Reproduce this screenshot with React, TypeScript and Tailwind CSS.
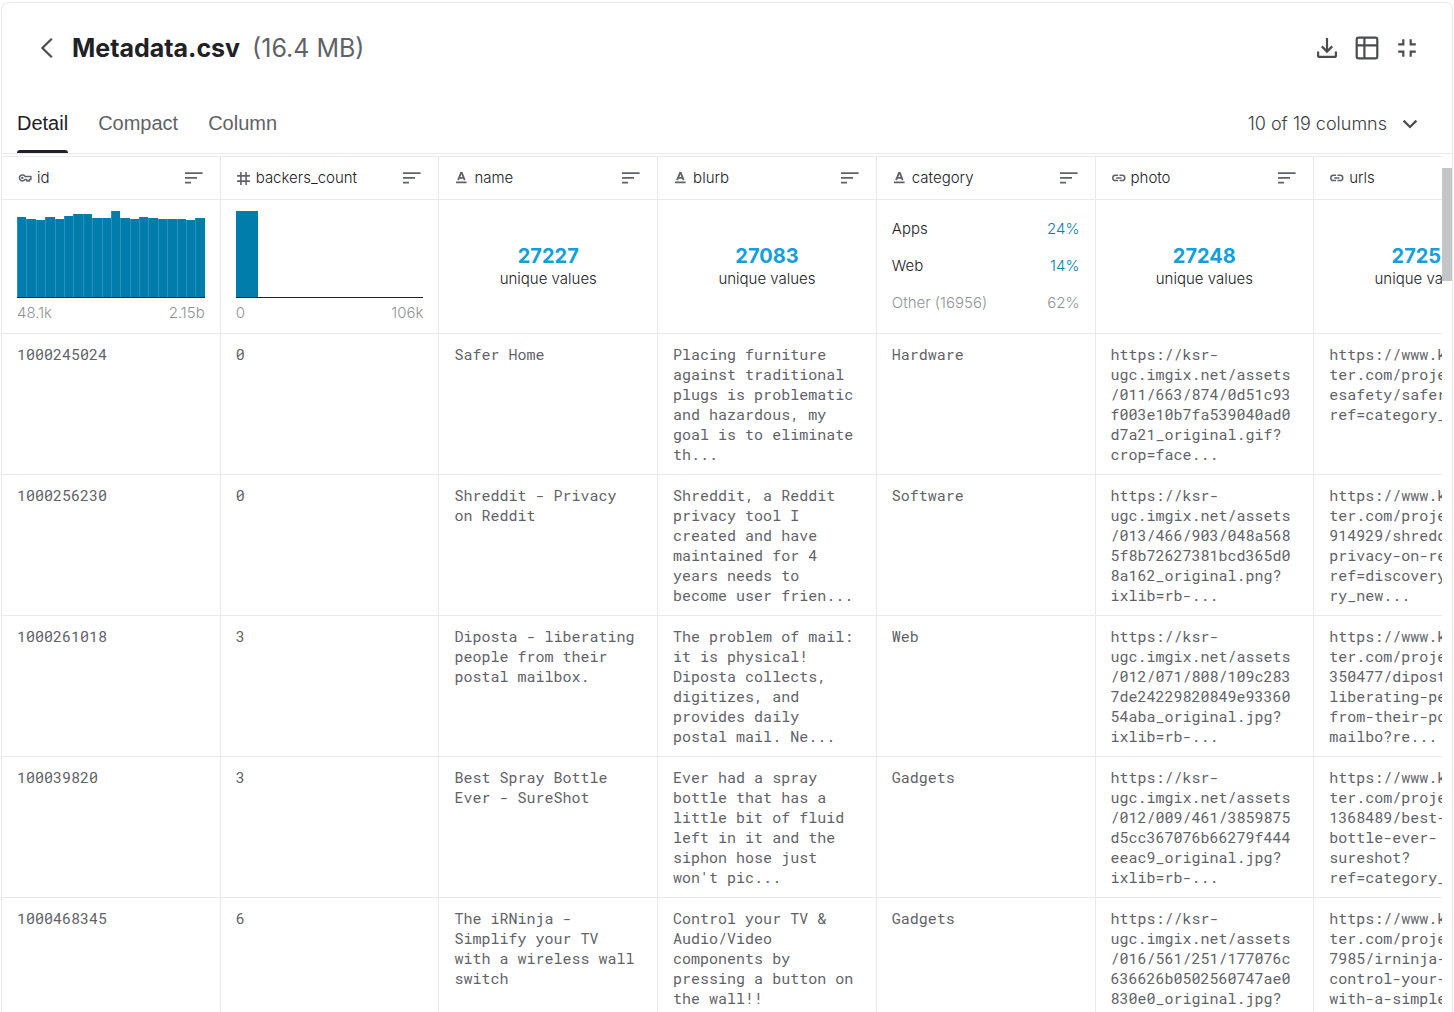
import React from "react";

type Kind = "key" | "hash" | "text" | "link";

const ICON_BOX: Record<Kind, string> = {
  key: "mr-[5px] h-4 w-[15px] shrink-0",
  hash: "mr-[5px] h-[15px] w-[15px] shrink-0",
  text: "mr-[6px] h-[14px] w-[14px] shrink-0",
  link: "mr-[5px] h-4 w-[15px] shrink-0",
};

function KindIcon({ kind }: { kind: Kind }) {
  const box = ICON_BOX[kind];
  if (kind === "key")
    return (
      <svg viewBox="-1 0 15 16" className={box} fill="none" stroke="#5f6368" strokeWidth="1.5" aria-hidden="true">
        <path d="M7 6.4A3 3 0 1 0 7 9.4H8.8V11H11.4V9.4H12.9V6.4Z" strokeLinejoin="round" />
        <circle cx="4.3" cy="7.9" r="1.2" fill="#5f6368" stroke="none" />
      </svg>
    );
  if (kind === "hash")
    return (
      <svg viewBox="-.5 -.5 15 15" className={box} fill="none" stroke="#5f6368" strokeWidth="1.6" aria-hidden="true">
        <path d="M4.4 .6V13.4M9.6 .6V13.4M.6 4.4H13.4M.6 9.6H13.4" />
      </svg>
    );
  if (kind === "text")
    return (
      <svg viewBox="0 0 14 14" className={box} aria-hidden="true">
        <path d="M2 10.6H12.6V12.3H2Z" fill="#5f6368" />
        <path d="M4.1 9.2L7 2H7.8L10.7 9.2M5.2 6.9H9.6" fill="none" stroke="#5f6368" strokeWidth="1.8" />
      </svg>
    );
  return (
    <svg viewBox="-1 0 15 16" className={box} fill="none" stroke="#5f6368" strokeWidth="1.5" aria-hidden="true">
      <path d="M6.1 5.2H3.5A2.7 2.7 0 0 0 3.5 10.6H6.1M7.5 5.2H10.1A2.7 2.7 0 0 1 10.1 10.6H7.5M4.2 7.9H9.4" />
    </svg>
  );
}

function SortIcon() {
  return (
    <svg viewBox="0 0 18 12" className="h-3 w-[18px]" fill="#5f6368" aria-hidden="true">
      <path d="M0 .2H17.6V2H0ZM0 5H12V6.8H0ZM0 9.7H6V11.5H0Z" />
    </svg>
  );
}

const ID_BARS = [80, 78, 77, 80, 78, 81, 83, 83, 79, 79, 86, 79, 78, 80, 79, 78, 78, 78, 77, 79];

function Histogram({ children, from, to }: { children: React.ReactNode; from: string; to: string }) {
  return (
    <div className="pt-[11px]">
      <div className="flex h-[87px] items-end border-b border-[#202124]">{children}</div>
      <div className="mt-[3px] flex justify-between leading-6 font-light text-[#8f9499]">
        <span>{from}</span>
        <span>{to}</span>
      </div>
    </div>
  );
}

function Unique({ count }: { count: string }) {
  return (
    <div className="flex h-full flex-col items-center justify-center whitespace-nowrap">
      <span className="text-xl leading-6 font-bold text-[#149fdb]">{count}</span>
      <span className="leading-[22px] font-light text-[#202124]">unique values</span>
    </div>
  );
}

const CATEGORIES = [
  { label: "Apps", share: "24%", row: "flex justify-between text-[#202124]", pct: "text-[#0781ad]" },
  { label: "Web", share: "14%", row: "flex justify-between text-[#202124]", pct: "text-[#0781ad]" },
  { label: "Other (16956)", share: "62%", row: "flex justify-between text-[#8f9499]", pct: "" },
];

const COLUMNS: { name: string; kind: Kind; summary: React.ReactNode }[] = [
  {
    name: "id",
    kind: "key",
    summary: (
      <Histogram from="48.1k" to="2.15b">
        {ID_BARS.map((h, i) => (
          <div key={i} className="flex-1 border-l border-[#2b93ba] bg-[#007dab]" style={{ height: h }} />
        ))}
      </Histogram>
    ),
  },
  {
    name: "backers_count",
    kind: "hash",
    summary: (
      <Histogram from="0" to="106k">
        <div className="h-[86px] w-[22px] bg-[#007dab]" />
      </Histogram>
    ),
  },
  { name: "name", kind: "text", summary: <Unique count="27227" /> },
  { name: "blurb", kind: "text", summary: <Unique count="27083" /> },
  {
    name: "category",
    kind: "text",
    summary: (
      <div className="flex flex-col gap-[13px] pt-[17px] leading-6 font-light">
        {CATEGORIES.map((c) => (
          <div key={c.label} className={c.row}>
            <span>{c.label}</span>
            <span className={c.pct}>{c.share}</span>
          </div>
        ))}
      </div>
    ),
  },
  { name: "photo", kind: "link", summary: <Unique count="27248" /> },
  { name: "urls", kind: "link", summary: <Unique count="27254" /> },
];

const ROWS: string[][] = [
  [
    "1000245024",
    "0",
    "Safer Home",
    "Placing furniture against traditional plugs is problematic and hazardous, my goal is to eliminate th...",
    "Hardware",
    "https://ksr-\nugc.imgix.net/assets\n/011/663/874/0d51c93\nf003e10b7fa539040ad0\nd7a21_original.gif?\ncrop=face...",
    "https://www.kickstar\nter.com/projects/saf\nesafety/safer-home?\nref=category_newest",
  ],
  [
    "1000256230",
    "0",
    "Shreddit - Privacy on Reddit",
    "Shreddit, a Reddit privacy tool I created and have maintained for 4 years needs to become user frien...",
    "Software",
    "https://ksr-\nugc.imgix.net/assets\n/013/466/903/048a568\n5f8b72627381bcd365d0\n8a162_original.png?\nixlib=rb-...",
    "https://www.kickstar\nter.com/projects/191\n914929/shreddit-\nprivacy-on-reddit?\nref=discovery_catego\nry_new...",
  ],
  [
    "1000261018",
    "3",
    "Diposta - liberating people from their postal mailbox.",
    "The problem of mail: it is physical! Diposta collects, digitizes, and provides daily postal mail. Ne...",
    "Web",
    "https://ksr-\nugc.imgix.net/assets\n/012/071/808/109c283\n7de24229820849e93360\n54aba_original.jpg?\nixlib=rb-...",
    "https://www.kickstar\nter.com/projects/164\n350477/diposta-\nliberating-people-\nfrom-their-postal-\nmailbo?re...",
  ],
  [
    "100039820",
    "3",
    "Best Spray Bottle Ever - SureShot",
    "Ever had a spray bottle that has a little bit of fluid left in it and the siphon hose just won't pic...",
    "Gadgets",
    "https://ksr-\nugc.imgix.net/assets\n/012/009/461/3859875\nd5cc367076b66279f444\neeac9_original.jpg?\nixlib=rb-...",
    "https://www.kickstar\nter.com/projects/107\n1368489/best-spray-\nbottle-ever-\nsureshot?\nref=category_newest",
  ],
  [
    "1000468345",
    "6",
    "The iRNinja - Simplify your TV with a wireless wall switch",
    "Control your TV & Audio/Video components by pressing a button on the wall!!",
    "Gadgets",
    "https://ksr-\nugc.imgix.net/assets\n/016/561/251/177076c\n636626b0502560747ae0\n830e0_original.jpg?\nixlib=rb-...",
    "https://www.kickstar\nter.com/projects/105\n7985/irninja-\ncontrol-your-tv-\nwith-a-simple-wall-\nswitch?re...",
  ],
];

export default function App() {
  return (
    <div className="h-screen overflow-hidden bg-white px-px pt-[2px] font-['Inter',sans-serif]">
      <main className="flex h-full flex-col overflow-hidden rounded-t-lg border border-b-0 border-[#e8eaed]">
        <header className="flex h-[90px] shrink-0 items-center justify-between pr-[33px] pl-[38px]">
          <div className="flex items-center">
            <button aria-label="Back" className="mr-[18px]">
              <svg viewBox="0 0 14 22" className="h-[22px] w-[14px]" fill="none" stroke="#4a4c50" strokeWidth="2.2">
                <path d="M11.8 1.8L2.4 11L11.8 20.2" />
              </svg>
            </button>
            <h1 className="flex gap-3 text-[25px] leading-8 text-[#5f6368]">
              <span className="font-bold text-[#202124]">Metadata.csv</span>
              <span>(16.4 MB)</span>
            </h1>
          </div>
          <div className="flex items-center gap-4">
            <button aria-label="Download">
              <svg viewBox="0 0 24 24" className="h-6 w-6" fill="none" stroke="#4a4c50" strokeWidth="2.2">
                <path d="M12 2V15.4M6.8 10.4L12 15.6L17.2 10.4" />
                <path d="M3.1 15.6V19.4A1.5 1.5 0 0 0 4.6 20.9H19.4A1.5 1.5 0 0 0 20.9 19.4V15.6" />
              </svg>
            </button>
            <button aria-label="Table view">
              <svg viewBox="0 0 24 24" className="h-6 w-6" fill="none" stroke="#4a4c50" strokeWidth="2.2">
                <rect x="1.7" y="1.7" width="20.6" height="20.6" rx="1.8" />
                <path d="M1.7 9.4H22.3M9.4 1.7V22.3" />
              </svg>
            </button>
            <button aria-label="Exit full screen">
              <svg viewBox="0 0 24 24" className="h-6 w-6" fill="none" stroke="#4a4c50" strokeWidth="2.2">
                <path d="M3.2 8.3H8.3V3.2M15.7 3.2V8.3H20.8M3.2 15.7H8.3V20.8M15.7 20.8V15.7H20.8" />
              </svg>
            </button>
          </div>
        </header>

        <div className="mb-[2px] flex h-[61px] shrink-0 items-stretch justify-between border-b border-[#e8eaed] pr-[34px] pl-[15px]">
          <nav className="flex gap-[30px] font-['Liberation_Sans',Arial,sans-serif] text-xl text-[#5f6368]">
            <button className="relative text-[#202124]">
              Detail
              <span className="absolute inset-x-0 bottom-0 h-[3px] rounded-t-sm bg-[#202124]" />
            </button>
            <button>Compact</button>
            <button>Column</button>
          </nav>
          <button className="flex items-center gap-[15px] pt-[2px] text-lg font-light text-[#3c4043]">
            10 of 19 columns
            <svg viewBox="0 0 16 10" className="h-[10px] w-4" fill="none" stroke="#4a4c50" strokeWidth="2.2">
              <path d="M1.6 1.6L8 8L14.4 1.6" />
            </svg>
          </button>
        </div>

        <div className="flex min-h-0 flex-1">
          <div className="min-w-0 flex-1 overflow-hidden border-t border-[#e8eaed]">
            <table className="w-[1531px] table-fixed border-separate border-spacing-0 text-[15px]">
              <thead>
                <tr>
                  {COLUMNS.map((c) => (
                    <th key={c.name} className="h-[43px] border-r border-b border-[#e8eaed] px-[15px] py-0 text-left font-light text-[#202124]">
                      <div className="flex items-center">
                        <KindIcon kind={c.kind} />
                        {c.name}
                        <button aria-label={`Sort ${c.name}`} className="ml-auto pr-[2px]">
                          <SortIcon />
                        </button>
                      </div>
                    </th>
                  ))}
                </tr>
              </thead>
              <tbody>
                <tr className="h-[134px]">
                  {COLUMNS.map((c) => (
                    <td key={c.name} className="h-[134px] border-r border-b border-[#e8eaed] px-[15px] py-0 align-top">
                      <div className="h-[133px]">{c.summary}</div>
                    </td>
                  ))}
                </tr>
                {ROWS.map((row) => (
                  <tr key={row[0]}>
                    {row.map((value, i) => (
                      <td
                        key={COLUMNS[i].name}
                        className="h-[141px] border-r border-b border-[#e8eaed] px-[15px] py-[10px] align-top font-['Roboto_Mono','Liberation_Mono',monospace] leading-5 break-words whitespace-pre-line text-[#5f6368]"
                      >
                        {value}
                      </td>
                    ))}
                  </tr>
                ))}
              </tbody>
            </table>
          </div>
          <div className="w-[10px] shrink-0 pt-3">
            <div className="h-[113px] bg-[#c4c5c6]" />
          </div>
        </div>
      </main>
    </div>
  );
}
